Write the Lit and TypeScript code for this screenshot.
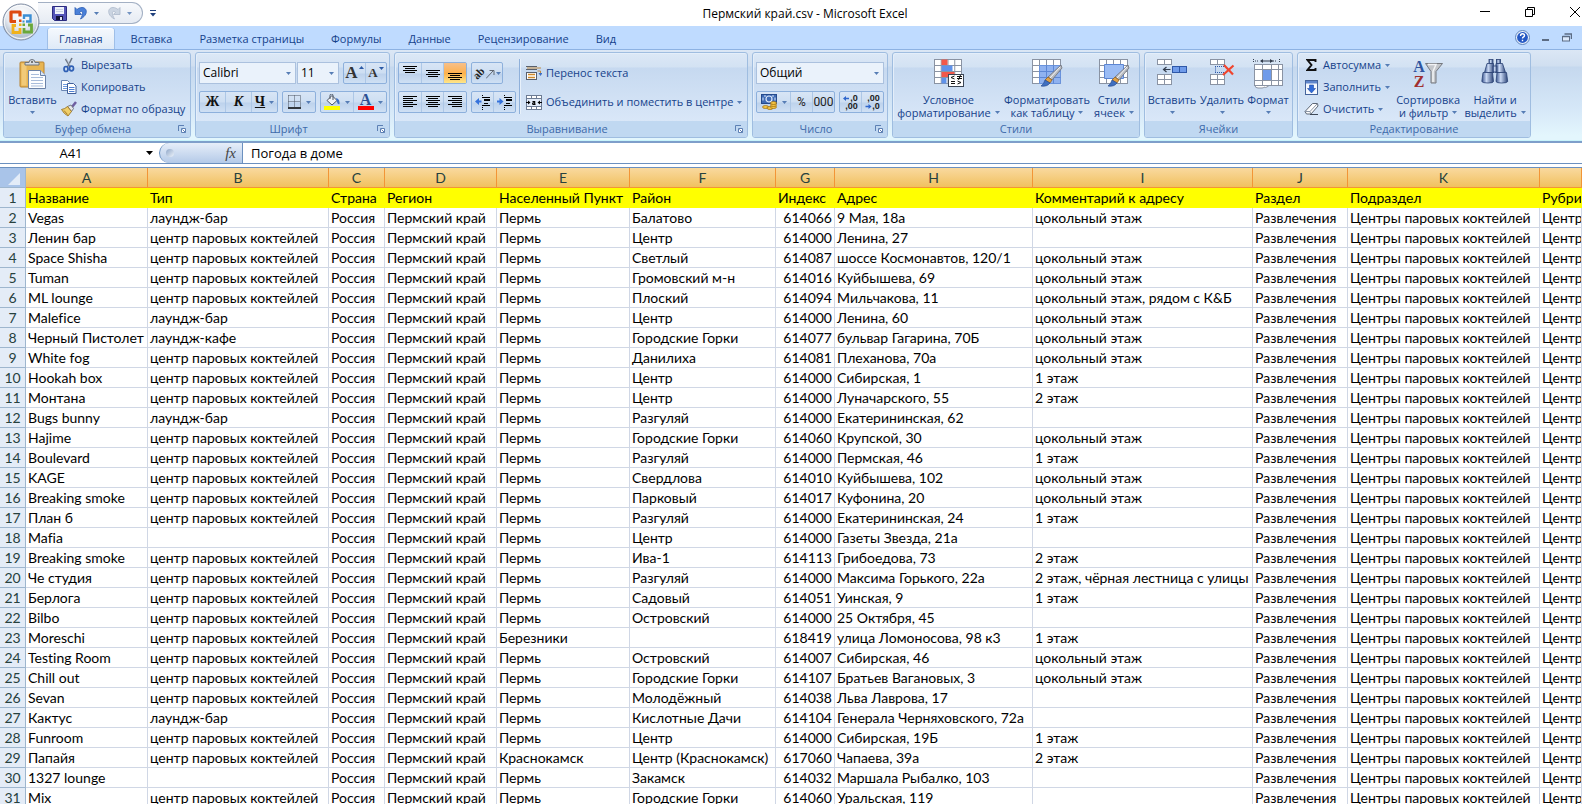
import { LitElement, html, css, svg, nothing } from "lit";
import { customElement, property } from "lit/decorators.js";

const TYPES = ["", "центр паровых коктейлей", "лаундж-бар", "лаундж-кафе"];
const GROUND = "цокольный этаж";

type Place = [string, number, string, string, string, string, string];

const PLACES: Place[] = [
  ["Vegas", 2, "Пермь", "Балатово", "614066", "9 Мая, 18а", GROUND],
  ["Ленин бар", 1, "Пермь", "Центр", "614000", "Ленина, 27", ""],
  ["Space Shisha", 1, "Пермь", "Светлый", "614087", "шоссе Космонавтов, 120/1", GROUND],
  ["Tuman", 1, "Пермь", "Громовский м-н", "614016", "Куйбышева, 69", GROUND],
  ["ML lounge", 1, "Пермь", "Плоский", "614094", "Мильчакова, 11", "цокольный этаж, рядом с К&Б"],
  ["Malefice", 2, "Пермь", "Центр", "614000", "Ленина, 60", GROUND],
  ["Черный Пистолет", 3, "Пермь", "Городские Горки", "614077", "бульвар Гагарина, 70Б", GROUND],
  ["White fog", 1, "Пермь", "Данилиха", "614081", "Плеханова, 70а", GROUND],
  ["Hookah box", 1, "Пермь", "Центр", "614000", "Сибирская, 1", "1 этаж"],
  ["Монтана", 1, "Пермь", "Центр", "614000", "Луначарского, 55", "2 этаж"],
  ["Bugs bunny", 2, "Пермь", "Разгуляй", "614000", "Екатерининская, 62", ""],
  ["Hajime", 1, "Пермь", "Городские Горки", "614060", "Крупской, 30", GROUND],
  ["Boulevard", 1, "Пермь", "Разгуляй", "614000", "Пермская, 46", "1 этаж"],
  ["KAGE", 1, "Пермь", "Свердлова", "614010", "Куйбышева, 102", GROUND],
  ["Breaking smoke", 1, "Пермь", "Парковый", "614017", "Куфонина, 20", GROUND],
  ["План б", 1, "Пермь", "Разгуляй", "614000", "Екатерининская, 24", "1 этаж"],
  ["Mafia", 0, "Пермь", "Центр", "614000", "Газеты Звезда, 21а", ""],
  ["Breaking smoke", 1, "Пермь", "Ива-1", "614113", "Грибоедова, 73", "2 этаж"],
  ["Че студия", 1, "Пермь", "Разгуляй", "614000", "Максима Горького, 22а", "2 этаж, чёрная лестница с улицы"],
  ["Берлога", 1, "Пермь", "Садовый", "614051", "Уинская, 9", "1 этаж"],
  ["Bilbo", 1, "Пермь", "Островский", "614000", "25 Октября, 45", ""],
  ["Moreschi", 1, "Березники", "", "618419", "улица Ломоносова, 98 к3", "1 этаж"],
  ["Testing Room", 1, "Пермь", "Островский", "614007", "Сибирская, 46", GROUND],
  ["Chill out", 1, "Пермь", "Городские Горки", "614107", "Братьев Вагановых, 3", GROUND],
  ["Sevan", 1, "Пермь", "Молодёжный", "614038", "Льва Лаврова, 17", ""],
  ["Кактус", 2, "Пермь", "Кислотные Дачи", "614104", "Генерала Черняховского, 72а", ""],
  ["Funroom", 1, "Пермь", "Центр", "614000", "Сибирская, 19Б", "1 этаж"],
  ["Папайя", 1, "Краснокамск", "Центр (Краснокамск)", "617060", "Чапаева, 39а", "2 этаж"],
  ["1327 lounge", 0, "Пермь", "Закамск", "614032", "Маршала Рыбалко, 103", ""],
  ["Mix", 1, "Пермь", "Городские Горки", "614060", "Уральская, 119", ""],
];

const TITLES = ["Название", "Тип", "Страна", "Регион", "Населенный Пункт", "Район", "Индекс", "Адрес",
  "Комментарий к адресу", "Раздел", "Подраздел", "Рубрика"];

const WIDTHS = [122, 181, 56, 112, 133, 146, 59, 198, 220, 95, 192];

const draw = (w: number, h: number, body: unknown) =>
  html`<svg class="ico" width=${w} height=${h} viewBox="0 0 ${w} ${h}" aria-hidden="true">${body}</svg>`;

const lines = (spans: number[][], top = 0) =>
  svg`${spans.map(([a, b], i) => svg`<path d="M${a} ${top + i * 2 + 0.5}H${b}" stroke="#000"/>`)}`;

const brush = svg`<path d="M29 6 L30 9 L20 21 L16 18 Z" fill="#b9bcc2" stroke="#6d7076" stroke-width=".8"/>
  <path d="M28 8 L18 19" stroke="#f4f5f7"/>
  <path d="M16 18 L20 21 L18 24 L13 21 Z" fill="#e0a044" stroke="#8a5a18" stroke-width=".7"/>
  <path d="M13 21 L18 24 Q15 28 9 27 Q12 25 13 21Z" fill="#3f6fc0" stroke="#2c4f92" stroke-width=".7"/>`;

const grid = (x0: number, y0: number, cols: number, rows: number, cw: number, ch: number) =>
  svg`<rect x=${x0} y=${y0} width=${cols * cw} height=${rows * ch} fill="#fff" stroke="#8a93a3"/>
  ${Array.from({ length: cols - 1 }, (_, i) => svg`<path d="M${x0 + (i + 1) * cw} ${y0}v${rows * ch}" stroke="#8a93a3"/>`)}
  ${Array.from({ length: rows - 1 }, (_, i) => svg`<path d="M${x0} ${y0 + (i + 1) * ch}h${cols * cw}" stroke="#8a93a3"/>`)}`;

const ICON = {
  office: draw(38, 38, svg`<defs>
      <radialGradient id="orb" cx=".5" cy=".3" r=".75"><stop offset="0" stop-color="#fff"/><stop offset=".55" stop-color="#e3e8ef"/><stop offset=".8" stop-color="#b4c0d0"/><stop offset="1" stop-color="#e9eef5"/></radialGradient></defs>
    <circle cx="19" cy="19" r="18" fill="url(#orb)" stroke="#7f8ca2"/>
    <circle cx="19" cy="19" r="16.6" fill="none" stroke="#fff" stroke-opacity=".8"/>
    <g fill="none" stroke-width="3.200">
      <path d="M18 13.500 V9 H9 V18.500 H14" stroke="#dd4a12" stroke-linejoin="round"/>
      <path d="M22 16 V12.500 H28.500 V18.500 H24" stroke="#3c8fd4" stroke-width="2.400"/>
      <path d="M14 22.500 H11 V29.500 H18 V25" stroke="#f0b21c" stroke-width="2.800"/>
      <path d="M22 25 V29 H29.500 V22 H26" stroke="#6aa83a" stroke-width="2.800"/>
    </g>
    <path d="M17 16.500h2.500v2.500h-2.500z" fill="#dd4a12"/><path d="M20.500 17.500h2v2h-2z" fill="#3c8fd4"/><path d="M17 20.500h2.500v2.500h-2.500z" fill="#f0b21c"/><path d="M20.500 20.500h2.500v2.500h-2.500z" fill="#6aa83a"/>`),
  save: draw(15, 15, svg`<path d="M.5 .5h14v14h-12l-2-2z" fill="#5454b8" stroke="#2c2c80"/>
    <rect x="3" y="1" width="9" height="7" fill="#eef2fb"/><path d="M4 3.500h7M4 5.500h7" stroke="#c8d0e4"/>
    <rect x="4" y="10" width="7" height="4" fill="#15153c"/><rect x="8" y="11" width="2" height="3" fill="#dfe4f4"/>`),
  undo: draw(14, 14, svg`<path d="M1 1.500v7h6.500L5.500 6.300C8 4 10.500 6 6.500 13 14.500 9 13.500 1.500 8 1.500c-2 0-3.500.8-5 2z" fill="#4a80d8" stroke="#2a5ab4" stroke-width=".8"/>`),
  redo: draw(14, 14, svg`<path d="M13 1.500v7H6.500l2-2.200C6 4 3.500 6 7.500 13-.5 9 .5 1.500 6 1.500c2 0 3.500.8 5 2z" fill="#c3cedd" stroke="#9dabc0" stroke-width=".8"/>`),
  down: draw(5, 3, svg`<path d="M0 0h5L2.500 3z" fill="#567db5"/>`),
  custom: draw(6, 7, svg`<path d="M0 .5h6" stroke="#1f3f7c"/><path d="M0 3h6L3 6.500z" fill="#1f3f7c"/>`),
  winMin: draw(10, 10, svg`<path d="M0 4.500h10" stroke="#000"/>`),
  winRestore: draw(10, 10, svg`<path d="M.5 2.500h7v7h-7zM2.500 2v-1.500h7v7H8" fill="none" stroke="#000"/>`),
  winClose: draw(10, 10, svg`<path d="M0 0l10 10M10 0L0 10" stroke="#000"/>`),
  help: draw(15, 15, svg`<circle cx="7.500" cy="7.500" r="7" fill="#e7effb" stroke="#5f85bd"/><circle cx="7.500" cy="7.500" r="5.400" fill="#2458c4"/>
    <path d="M5.500 6q0-2.300 2-2.300t2 1.800q0 1-1.200 1.700-.8.500-.8 1.300M7.500 9.700v1.500" fill="none" stroke="#fff" stroke-width="1.400"/>`),
  mdiMin: draw(8, 9, svg`<path d="M0 7h7" stroke="#5c6c84" stroke-width="2"/>`),
  mdiRestore: draw(10, 9, svg`<path d="M2.500 1h7v5" fill="none" stroke="#5c6c84" stroke-width="1.500"/><rect x=".5" y="3.500" width="7" height="4.500" fill="#dce9fb" stroke="#5c6c84"/><path d="M.5 3.500h7" stroke="#5c6c84" stroke-width="1.500"/>`),
  paste: draw(28, 30, svg`<rect x="1" y="3" width="24" height="25" rx="1" fill="#e8b552" stroke="#b98330"/>
    <rect x="2.500" y="4.500" width="5" height="22" fill="#f2ca78"/>
    <path d="M6 6V3.500h4Q10 .5 13 .5t3 3h4V6z" fill="#d9dde3" stroke="#6d747f"/><circle cx="13" cy="3" r="1" fill="#555"/>
    <path d="M9.500 11.500h12l5 5v13h-17z" fill="#fdfeff" stroke="#6c83a8"/><path d="M21.500 11.500v5h5" fill="#dbe6f5" stroke="#6c83a8"/>
    <path d="M12 15.500h8M12 18.500h12M12 21.500h12M12 24.500h12M12 27h12" stroke="#a9bddb"/>`),
  cut: draw(16, 16, svg`<path d="M4.500 2l5 8M11 1L6.500 10" stroke="#6d7887" stroke-width="1.600" fill="none"/><path d="M5 1l4.500 8" stroke="#c7cfda" stroke-width=".8"/>
    <ellipse cx="5" cy="12" rx="2" ry="2.500" fill="none" stroke="#2f5fb4" stroke-width="1.700"/><ellipse cx="10.500" cy="11.500" rx="2" ry="2.300" fill="none" stroke="#2f5fb4" stroke-width="1.700"/>`),
  copy: draw(16, 16, svg`<path d="M.5 1.500h6l2 2v8h-8z" fill="#fff" stroke="#6a86b4"/><path d="M2 5.500h4M2 7.500h4M2 9.500h4" stroke="#6f9be0"/>
    <path d="M6.500 4.500h6l2.500 2.500v7.500H6.500z" fill="#fff" stroke="#3f5f9a"/><path d="M8 8.500h5.500M8 10.500h5.500M8 12.500h5.500" stroke="#4f7fd0"/>`),
  painter: draw(16, 16, svg`<path d="M15 1l-4 5" stroke="#6f5fa0" stroke-width="2.500"/><path d="M6.500 5.500l3.500-1.500 2.500 3.500-2 3z" fill="#e4e6ea" stroke="#6c7077" stroke-width=".9"/>
    <path d="M6.500 5.500l4 5-3.500 4.500Q3 13 .5 8.500 4 8 6.500 5.500z" fill="#f0cf6a" stroke="#9c7420" stroke-width=".9"/><path d="M3 9.500l3.500 4" stroke="#a97d28"/>`),
  grow: draw(5, 14, svg`<path d="M0 3h5L2.500 0z" fill="#2b5aa6"/>`),
  shrink: draw(5, 14, svg`<path d="M0 1h5L2.500 4z" fill="#2b5aa6"/>`),
  border: draw(14, 14, svg`<path d="M.5 .5h12M.5 6.500h12M.5 .5v11M6.500 .5v11M12.500 .5v11" stroke="#4a5260" stroke-dasharray="1 1"/><path d="M0 13h13" stroke="#000" stroke-width="1.500"/>`),
  fill: draw(17, 16, svg`<path d="M3 6.500L8 1.500l5 5-5 4.500z" fill="#f2f4f8" stroke="#4c5665"/><path d="M6 5V1.500Q6 0 7.500 0T9 1.500V6" fill="none" stroke="#4c5665"/><path d="M12 4q4 1 3.500 6-1.500 1-2.500-2z" fill="#3e6fc4"/><rect x="0" y="12" width="16" height="4" fill="#ff0"/>`),
  wrap: draw(16, 16, svg`<path d="M0 1.500h11M0 4.500h11" stroke="#59606c"/><path d="M1 3h14M11.500 6h3V9" fill="none" stroke="#c08a40"/><path d="M12.500 8h4l-2 3z" fill="#3e6fc4"/>
    <rect x=".5" y="7.500" width="10" height="7" fill="#fff" stroke="#59606c"/><path d="M2 9.500h7M2 12.500h7" stroke="#d08a2c" stroke-width="1.400"/>`),
  merge: draw(16, 15, svg`<rect x=".5" y=".5" width="15" height="14" fill="#fff" stroke="#6d7c94"/><path d="M5.500 .5v3M10.500 .5v3M5.500 11v3M10.500 11v3M.5 3.500h15M.5 11.500h15" stroke="#6d7c94"/>
    <rect x="1" y="4" width="14" height="7" fill="#e2ebf8"/><path d="M0 7.500h4M12 7.500h4" stroke="#000" stroke-width="1.200"/><path d="M2 5.500v4l2.500-2zM14 5.500v4l-2.500-2z"/>
    <path d="M6.500 6.500h2.200v3M8.700 7.800H7q-1 1 .2 1.600h2.300" fill="none" stroke="#000" stroke-width="1.100"/>`),
  outdent: draw(16, 15, svg`<path d="M7 .5h1M7 2.500h8M9 4.500h6M9 8.500h4M7 10.500h8M7 12.500h1M7 14.500h1" stroke="#000"/><path d="M9 5.500h6" stroke="#000"/><path d="M0 6.500l4-3.500v2.400h2.500v2.200H4V10z" fill="#3572dc"/>`),
  indent: draw(16, 15, svg`<path d="M7 .5h1M7 2.500h8M9 4.500h6M9 8.500h4M7 10.500h8M7 12.500h1M7 14.500h1" stroke="#000"/><path d="M9 5.500h6" stroke="#000"/><path d="M6.500 6.500L2.500 3v2.400H0v2.200h2.500V10z" fill="#3572dc"/>`),
  slant: draw(9, 12, svg`<path d="M0 11.500L7 4M3.500 3.500H8V8" fill="none" stroke="#5f6670"/>`),
  money: draw(17, 16, svg`<rect x=".5" y=".5" width="15" height="9" fill="#3f6bb5" stroke="#254a8c"/><ellipse cx="8" cy="5" rx="3" ry="3" fill="none" stroke="#dce8fb" stroke-width="1.200"/><path d="M2 3.500v3M14 3.500v3M3 2h2M11 2h2" stroke="#dce8fb"/>
    <g fill="#f5c542" stroke="#9a6a10" stroke-width=".7"><ellipse cx="4.500" cy="13" rx="3" ry="1.500"/><ellipse cx="9" cy="14" rx="3" ry="1.500"/><ellipse cx="12.500" cy="13" rx="3" ry="1.500"/><ellipse cx="12.500" cy="11" rx="3" ry="1.500"/><ellipse cx="12.500" cy="9" rx="3" ry="1.500"/></g>`),
  left: draw(7, 5, svg`<path d="M0 2.500L3 0v1.700h3v1.600H3V5z" fill="#2f66cc"/>`),
  right: draw(7, 5, svg`<path d="M6.500 2.500L3.500 0v1.700h-3v1.600h3V5z" fill="#2f66cc"/>`),
  conditional: draw(30, 29, svg`${grid(0.5, 0.5, 4, 4, 6.75, 6)}<path d="M7.500 .5h6v5.500h-6z" fill="#f2584a"/><path d="M7.500 6.500h11v5.500h-11z" fill="#5f92ea"/><path d="M7.500 13h13v5h-13z" fill="#f2584a"/><path d="M7.500 19h5v5.500h-5z" fill="#5f92ea"/>
    <rect x="14.500" y="15.500" width="15" height="12" fill="#fff" stroke="#3b4656"/><path d="M20.500 17l-3.500 1.500 3.500 1.500M17 22.500h4M17 24.500h4M23 17.500h5M23 19.500h5M26.500 16l-2 5M23.500 22l3.500 1.500-3.500 1.500" fill="none" stroke="#111"/>`),
  table: draw(31, 29, svg`${grid(0.5, 0.5, 4, 4, 7, 6)}<path d="M7.500 6.500h21v18h-21z" fill="#8fb2f0" stroke="#6a93dc"/><path d="M14.500 6.500v18M21.500 6.500v18M7.500 12.500h21M7.500 18.500h21" stroke="#5c86d4"/>${brush}`),
  styles: draw(31, 29, svg`${grid(0.5, 0.5, 4, 4, 7, 6)}<path d="M5.500 5.500h19v14h-19z" fill="#9bbcf4" stroke="#5c86d4"/>${brush}`),
  insert: draw(31, 28, svg`${grid(0.5, 0.5, 2, 1, 7, 5)}${grid(0.5, 15.500, 2, 2, 7, 5)}<rect x="15.500" y="7.500" width="14" height="6" fill="#6f9bea" stroke="#2f58a8"/><path d="M22.500 7.500v6" stroke="#2f58a8"/><path d="M13.500 10.500H7M9.500 8L6.500 10.500 9.500 13" fill="none" stroke="#333d4d" stroke-width="1.200"/>`),
  remove: draw(25, 28, svg`${grid(0.5, 0.5, 2, 1, 7, 5)}${grid(0.5, 15.500, 2, 2, 7, 5)}<path d="M5 7.500h9M5 13.500h9M5.500 7.500v6" stroke="#2f58a8" stroke-dasharray="1 1" fill="none"/><path d="M14 6l9 9.500M23.500 6.500L13 16" stroke="#f0452e" stroke-width="2.200"/>`),
  format: draw(31, 30, svg`<path d="M.5 0v4M26.500 0v4M2 2h4M20 2h4" stroke="#333d4d" stroke-dasharray="1 1"/><path d="M8 2h12" stroke="#333d4d" stroke-width="1.200"/><path d="M10 0v4L7 2zM17 0v4l3-2z" fill="#333d4d"/>
    <rect x="1.500" y="5.500" width="28" height="21" fill="#fff" stroke="#8a93a3"/><path d="M9.500 5.500v21M18.500 5.500v21M25.500 5.500v21M1.500 10.500h28M1.500 21.500h28" stroke="#8a93a3"/><rect x="10" y="11" width="8" height="10" fill="#6f9bea"/><path d="M2 26.500q0 2.500 3 2.500h4q2 0 2-1 1 1 3 0l2-1.500z" fill="#fff" stroke="#8a93a3"/>`),
  sum: draw(11, 12, svg`<path d="M9.500 3V1H1.500l4 5-4 5H9.500V9" fill="none" stroke="#111" stroke-width="1.900"/>`),
  fillDown: draw(13, 15, svg`<rect x=".5" y=".5" width="12" height="14" fill="#f6f9fe" stroke="#44639c"/><rect x="1" y="1" width="11" height="2.500" fill="#5f86cc"/><path d="M4.500 5h4v3.500h2L6.500 13 2.500 8.500h2z" fill="#2f6ad8" stroke="#1e4aa2" stroke-width=".6"/>`),
  erase: draw(15, 14, svg`<path d="M1 9.500L8.500 1.500h5L14 4 7 12H2.500z" fill="#fdfdfe" stroke="#5c6675"/><path d="M1 9.500h5L13.500 1.500M6 9.500l.8 2.500" fill="none" stroke="#8b95a5"/><path d="M6 12.500h8" stroke="#3e4857" stroke-width="1.200"/>`),
  funnel: draw(18, 21, svg`<path d="M.5 .5h17L11 8.500V20l-5 0V8.500z" fill="#c3c6cb" stroke="#74787f"/><path d="M3 1.500h8L8 8.500V19" fill="none" stroke="#f2f3f5" stroke-width="1.500"/>`),
  find: draw(28, 25, svg`<defs><linearGradient id="lens" x1="0" x2="1" y1="0" y2="0"><stop offset="0" stop-color="#36518c"/><stop offset=".4" stop-color="#c9d9f4"/><stop offset="1" stop-color="#2c4478"/></linearGradient></defs>
    <g fill="url(#lens)" stroke="#2a4174" stroke-width=".8"><rect x="8" y=".5" width="4" height="4"/><rect x="15.500" y=".5" width="4" height="4"/><path d="M6 4.500h6.500l.5 9H3.500z"/><path d="M15 4.500h6.500l3 9H14.500z"/><rect x="12" y="7" width="4" height="6"/><path d="M2 13.500h9.500l1 9q0 1.500-5.500 1.500T.8 22.500z"/><path d="M16 13.500h9.500l1.200 9q-.7 1.500-6 1.500t-5.700-1.500z"/></g>`),
  launcher: draw(8, 8, svg`<path d="M.5 6V.5H6" fill="none" stroke="#5d80b4"/><path d="M3.500 3.500h4v4h-4z" fill="#fff" stroke="#5d80b4"/><path d="M4.500 4.500l3 3" stroke="#5d80b4"/>`),
};

const ALIGN = {
  l: [[0, 14], [0, 10], [0, 14], [0, 10], [0, 14], [0, 10]],
  c: [[0, 14], [2, 12], [0, 14], [2, 12], [0, 14], [2, 12]],
  r: [[0, 14], [4, 14], [0, 14], [4, 14], [0, 14], [4, 14]],
};
const vAlign = (top: number) => draw(14, 16, lines([[0, 14], [2, 12], [0, 14], [2, 12]], top));
const hAlign = (s: number[][]) => draw(14, 12, lines(s));

@customElement("ribbon-group")
class RibbonGroup extends LitElement {
  @property() label = "";
  @property({ type: Boolean }) launcher = false;

  static styles = css`
    :host { display: flex; flex-direction: column; flex: none; box-sizing: border-box; border: 1px solid #9fbde0; border-radius: 3px;
      box-shadow: inset 1px 1px 0 #e4eefa; overflow: hidden;
      background: linear-gradient(#dce8f6 0, #d3e2f3 14px, #c6d9f0 15px, #d9e7f8 68px); }
    .body { flex: 1; display: flex; min-height: 0; }
    .foot { display: flex; align-items: center; height: 16px; padding: 0 4px; background: #c0d8f1; color: #3e6aaa; line-height: 16px; }
    .name { flex: 1; text-align: center; }
    .open { border: 0; padding: 0; background: none; display: flex; }
  `;

  render() {
    return html`<div class="body"><slot></slot></div>
      <div class="foot"><span class="name">${this.label}</span>
        ${this.launcher ? html`<button class="open" aria-label=${this.label}>${ICON.launcher}</button>` : nothing}</div>`;
  }
}

@customElement("excel-ribbon")
class ExcelRibbon extends LitElement {
  static styles = css`
    :host { display: flex; gap: 4px; padding: 2px 3px 3px; height: 86px; overflow: hidden; color: #15428b; font-size: 11px;
      background: linear-gradient(#dbe7f5 0, #d0dff0 16px, #c5d8ee 17px, #d6e8f8 60px, #e3f6fd 86px);
      border-top: 1px solid #8db2e3; box-shadow: inset 0 -1px 0 #c8f4fb; }
    button, select { font: inherit; color: inherit; margin: 0; padding: 0; border: 0; background: none; }
    button { display: flex; align-items: center; justify-content: center; white-space: nowrap; }
    svg { flex: none; display: block; }
    .clip { width: 188px; } .font { width: 195px; } .align { width: 354px; } .num { width: 136px; }
    .style { width: 248px; } .cells { width: 149px; } .edit { width: 234px; }
    .big { flex-direction: column; justify-content: flex-start; line-height: 13px; padding-top: 6px; }
    .pic { height: 34px; display: flex; align-items: flex-start; }
    .sub { display: flex; align-items: center; gap: 4px; height: 12px; }
    .row { display: flex; align-items: center; gap: 4px; }
    .stack { display: flex; flex-direction: column; padding-top: 1px; }
    .stack button { height: 22px; gap: 4px; justify-content: flex-start; }
    .lead { padding-left: 5px; }
    .slot16 { width: 16px; display: flex; justify-content: center; }
    .two { display: flex; flex-direction: column; gap: 7px; padding: 9px 3px 0; flex: 1; }
    .set { display: flex; box-sizing: border-box; height: 22px; border: 1px solid #8db0dc; border-radius: 2px;
      background: linear-gradient(#d8e5f5 0, #cddef2 10px, #bdd2ec 11px, #cfe0f4 20px); }
    .set button { flex: 1; gap: 4px; min-width: 21px; }
    .set button + button { border-left: 1px solid #adc7e6; }
    .set .tight { gap: 1px; }
    .set .cash { flex: none; width: 33px; }
    .set .on { background: linear-gradient(#f6c08a, #fdb254 9px, #fbb04a 10px, #fee68a); }
    .combo { display: grid; box-sizing: border-box; height: 22px; align-items: center; background: #eaf2fb; border: 1px solid #abc1de; color: #000; font-size: 12px; }
    .combo select { grid-area: 1 / 1; appearance: none; height: 20px; padding-left: 3px; outline: 0; width: 100%; }
    .combo svg { grid-area: 1 / 1; justify-self: end; margin-right: 4px; pointer-events: none; }
    .pair { display: flex; gap: 1px; }
    .w97 { width: 97px; } .w42 { width: 42px; } .w79 { width: 79px; } .w34 { width: 34px; } .w69 { width: 69px; } .w32 { width: 32px; } .w45 { width: 45px; }
    .fit { flex: none; }
    .serif { font: bold 14px "Liberation Serif", serif; color: #111; }
    .it { font-style: italic; }
    .un { text-decoration: underline; }
    .letter { font: bold 17px/18px "Liberation Serif", serif; color: #333; }
    .small { font-size: 13px; }
    .tint { display: flex; flex-direction: column; align-items: center; width: 16px; font: bold 16px/12px "Liberation Serif", serif; color: #2c4f92; border-bottom: 4px solid #f00; }
    .wide { flex: 1; }
    .rule { width: 1px; margin: 6px 0 7px; background: #8fb0da; border-right: 1px solid #e8f1fb; }
    .texts { display: flex; flex-direction: column; gap: 7px; padding: 9px 0 0 5px; }
    .texts button { height: 22px; gap: 4px; justify-content: flex-start; }
    .dig { font: 12px "Roboto", sans-serif; color: #222; }
    .dec { display: flex; flex-direction: column; align-items: flex-end; font: bold 9px/8px "Liberation Sans", sans-serif; color: #222; }
    .dec span { display: flex; align-items: center; }
    .az { display: flex; flex-direction: column; font: bold 16px/15px "Liberation Serif", serif; color: #2f55a0; }
    .z { color: #a02f2f; }
    .sort { display: flex; }
    .sort svg { margin-top: 4px; }
    .aa { font: bold 11px/11px "Liberation Serif", serif; color: #222; transform: rotate(-45deg); }
  `;

  private big(w: number, icon: unknown, a: string, b?: string) {
    return html`<button class="big" style="width:${w}px"><span class="pic">${icon}</span><span>${a}</span>
      <span class="sub">${b ?? nothing}${ICON.down}</span></button>`;
  }

  render() {
    return html`
      <ribbon-group class="clip" label="Буфер обмена" launcher>
        ${this.big(57, ICON.paste, "Вставить")}
        <div class="stack">
          <button>${ICON.cut}Вырезать</button>
          <button>${ICON.copy}Копировать</button>
          <button>${ICON.painter}Формат по образцу</button>
        </div>
      </ribbon-group>

      <ribbon-group class="font" label="Шрифт" launcher>
        <div class="two">
          <div class="row">
            <span class="pair">
              <label class="combo w97"><select aria-label="Шрифт"><option>Calibri</option></select>${ICON.down}</label>
              <label class="combo w42"><select aria-label="Размер"><option>11</option></select>${ICON.down}</label>
            </span>
            <div class="set wide">
              <button class="tight" aria-label="Увеличить"><span class="letter">A</span>${ICON.grow}</button>
              <button class="tight" aria-label="Уменьшить"><span class="letter small">A</span>${ICON.shrink}</button>
            </div>
          </div>
          <div class="row">
            <div class="set w79">
              <button class="serif">Ж</button><button class="serif it">К</button>
              <button><span class="serif un">Ч</span>${ICON.down}</button>
            </div>
            <div class="set w34"><button aria-label="Границы">${ICON.border}${ICON.down}</button></div>
            <div class="set wide">
              <button aria-label="Заливка">${ICON.fill}${ICON.down}</button>
              <button aria-label="Цвет текста"><span class="tint">A</span>${ICON.down}</button>
            </div>
          </div>
        </div>
      </ribbon-group>

      <ribbon-group class="align" label="Выравнивание" launcher>
        <div class="two fit">
          <div class="row">
            <div class="set w69">
              <button aria-label="По верхнему краю">${vAlign(1)}</button>
              <button aria-label="По середине">${vAlign(5)}</button>
              <button class="on" aria-label="По нижнему краю">${vAlign(8)}</button>
            </div>
            <div class="set w32"><button class="tight" aria-label="Ориентация"><span class="aa">ab</span>${ICON.slant}${ICON.down}</button></div>
          </div>
          <div class="row">
            <div class="set w69">
              <button aria-label="По левому краю">${hAlign(ALIGN.l)}</button>
              <button aria-label="По центру">${hAlign(ALIGN.c)}</button>
              <button aria-label="По правому краю">${hAlign(ALIGN.r)}</button>
            </div>
            <div class="set w45">
              <button aria-label="Уменьшить отступ">${ICON.outdent}</button>
              <button aria-label="Увеличить отступ">${ICON.indent}</button>
            </div>
          </div>
        </div>
        <div class="rule"></div>
        <div class="texts">
          <button>${ICON.wrap}Перенос текста</button>
          <button>${ICON.merge}Объединить и поместить в центре ${ICON.down}</button>
        </div>
      </ribbon-group>

      <ribbon-group class="num" label="Число" launcher>
        <div class="two">
          <label class="combo"><select aria-label="Числовой формат"><option>Общий</option></select>${ICON.down}</label>
          <div class="row">
            <div class="set w79">
              <button class="cash" aria-label="Денежный формат">${ICON.money}${ICON.down}</button>
              <button class="dig">%</button><button class="dig">000</button>
            </div>
            <div class="set wide">
              <button aria-label="Увеличить разрядность"><span class="dec"><span>${ICON.left},0</span><span>,00</span></span></button>
              <button aria-label="Уменьшить разрядность"><span class="dec"><span>,00</span><span>${ICON.right},0</span></span></button>
            </div>
          </div>
        </div>
      </ribbon-group>

      <ribbon-group class="style" label="Стили">
        ${this.big(111, ICON.conditional, "Условное", "форматирование")}
        ${this.big(86, ICON.table, "Форматировать", "как таблицу")}
        ${this.big(48, ICON.styles, "Стили", "ячеек")}
      </ribbon-group>

      <ribbon-group class="cells" label="Ячейки">
        ${this.big(54, ICON.insert, "Вставить")}
        ${this.big(46, ICON.remove, "Удалить")}
        ${this.big(46, ICON.format, "Формат")}
      </ribbon-group>

      <ribbon-group class="edit" label="Редактирование">
        <div class="stack lead">
          <button><span class="slot16">${ICON.sum}</span>Автосумма ${ICON.down}</button>
          <button><span class="slot16">${ICON.fillDown}</span>Заполнить ${ICON.down}</button>
          <button><span class="slot16">${ICON.erase}</span>Очистить ${ICON.down}</button>
        </div>
        ${this.big(76, html`<span class="sort"><span class="az"><span>A</span><span class="z">Z</span></span>${ICON.funnel}</span>`, "Сортировка", "и фильтр")}
        ${this.big(58, ICON.find, "Найти и", "выделить")}
      </ribbon-group>
    `;
  }
}

@customElement("sheet-grid")
class SheetGrid extends LitElement {
  static styles = css`
    :host { display: block; overflow: hidden; }
    table { width: 100%; table-layout: fixed; border-collapse: separate; border-spacing: 0; font-size: 14px; line-height: 19px; color: #000; font-variant-ligatures: none; }
    th, td { box-sizing: border-box; height: 20px; padding: 0 2px; overflow: hidden; white-space: nowrap; text-align: left; font-weight: normal;
      border-right: 1px solid #d0d7e5; border-bottom: 1px solid #d0d7e5; }
    .num { text-align: right; }
    thead th { text-align: center; color: #27413e; background: linear-gradient(#f9d99f, #f1c15f); border-color: #f29536; }
    .side { padding: 0; text-align: center; color: #27413e; background: #e4ecf7; border-color: #9eb6ce; }
    .title td { background: #ff0; border-color: #ff0; }
    thead .corner { background: #a9c4e9; border-color: #9eb6ce; }
    .corner svg { display: block; margin: 3px 3px 0 auto; }
    .index { width: 26px; }
  `;

  render() {
    const rows = PLACES.map(([name, type, city, area, zip, street, note]) =>
      [name, TYPES[type], "Россия", "Пермский край", city, area, zip, street, note,
        "Развлечения", "Центры паровых коктейлей", "Центры паровых коктейлей"]);
    return html`<table>
      <colgroup><col class="index">${WIDTHS.map((w) => html`<col style="width:${w}px">`)}<col></colgroup>
      <thead><tr><th class="corner">${draw(12, 12, svg`<path d="M12 0v12H0z" fill="#e3ecf8"/>`)}</th>
        ${[..."ABCDEFGHIJK"].map((c) => html`<th scope="col">${c}</th>`)}<th></th></tr></thead>
      <tbody>
        <tr class="title"><th class="side" scope="row">1</th>${TITLES.map((t) => html`<td>${t}</td>`)}</tr>
        ${rows.map((cells, i) => html`<tr><th class="side" scope="row">${i + 2}</th>
          ${cells.map((c, j) => html`<td class=${j === 6 ? "num" : ""}>${c}</td>`)}</tr>`)}
      </tbody></table>`;
  }
}

@customElement("app-root")
class AppRoot extends LitElement {
  static styles = css`
    :host { display: flex; flex-direction: column; height: 100vh; overflow: hidden; background: #fff; font: 12px/16px "Open Sans", "Noto Sans", sans-serif; }
    button, input { font: inherit; color: inherit; margin: 0; padding: 0; border: 0; background: none; outline: 0; }
    button { display: flex; align-items: center; justify-content: center; }
    svg { display: block; flex: none; }
    .top { display: flex; height: 26px; flex: none; position: relative; }
    .orb { position: absolute; left: 2px; top: 3px; z-index: 2; }
    .quick { display: flex; align-items: center; height: 20px; margin: 2px 0 0 38px; padding: 0 10px 0 14px; width: 80px;
      border: 1px solid #a3b0c4; border-left: 0; border-radius: 0 11px 11px 0; background: linear-gradient(#f7f9fc, #e6ebf3); }
    .undo { margin-left: 7px; gap: 6px; }
    .redo { margin-left: 8px; gap: 6px; opacity: .8; }
    .more { margin-left: 7px; }
    .title { flex: 1; text-align: center; line-height: 27px; padding-right: 8px; color: #000; }
    .win { width: 45px; height: 24px; }
    .last { width: 40px; justify-content: flex-start; padding-left: 18px; margin-right: -10px; }
    .tabs { display: flex; align-items: flex-end; flex: none; height: 23px; padding-left: 48px; gap: 7px; background: #bfdbff; color: #15428b; font-size: 11px; }
    .tab { height: 21px; padding: 0 10px; border: 1px solid transparent; border-width: 1px 0 0; border-radius: 3px 3px 0 0; }
    .on { padding: 0 11px; background: linear-gradient(#f4f8fd, #dfeaf7); border-color: #fff; box-shadow: -1px 0 #9fbfe8, 1px 0 #9fbfe8; }
    .tools { margin-left: auto; display: flex; align-items: center; height: 23px; padding-right: 10px; gap: 12px; }
    .bar { display: flex; flex: none; height: 20px; border: 1px solid #6b90bf; border-width: 2px 0 1px; border-top-color: #7f9fca; background: #fff; margin-bottom: 3px; color: #000; font-size: 13px; }
    .name { width: 142px; text-align: center; }
    .drop { width: 17px; justify-content: flex-start; padding-left: 4px; box-sizing: border-box; }
    .knob { width: 84px; box-sizing: border-box; display: flex; align-items: center; justify-content: space-between; padding: 0 6px; border: 1px solid #6b90bf; border-width: 0 1px 0 1px;
      border-radius: 10px 0 0 10px; background: linear-gradient(#e6eef9, #b4cae8); }
    .dot { width: 8px; height: 8px; border-radius: 4px; background: linear-gradient(135deg, #8ea6c8, #eef4fb); }
    .fx { font: italic 15px "Liberation Serif", serif; color: #444; }
    .text { flex: 1; min-width: 0; padding-left: 8px; }
    .sheet { flex: 1; min-height: 0; border-top: 1px solid #6b90bf; font-family: "Lato", "Open Sans", sans-serif; }
  `;

  render() {
    return html`
      <header class="top">
        <button class="orb" aria-label="Office">${ICON.office}</button>
        <div class="quick">
          <button aria-label="Сохранить">${ICON.save}</button>
          <button class="undo" aria-label="Отменить">${ICON.undo}${ICON.down}</button>
          <button class="redo" aria-label="Вернуть">${ICON.redo}${ICON.down}</button>
        </div>
        <button class="more" aria-label="Настройка панели">${ICON.custom}</button>
        <div class="title">Пермский край.csv - Microsoft Excel</div>
        <button class="win" aria-label="Свернуть">${ICON.winMin}</button>
        <button class="win" aria-label="Восстановить">${ICON.winRestore}</button>
        <button class="win last" aria-label="Закрыть">${ICON.winClose}</button>
      </header>
      <nav class="tabs">
        ${["Главная", "Вставка", "Разметка страницы", "Формулы", "Данные", "Рецензирование", "Вид"].map((t, i) =>
          html`<button class="tab ${i === 0 ? "on" : ""}">${t}</button>`)}
        <div class="tools">
          <button aria-label="Справка">${ICON.help}</button>
          <button aria-label="Свернуть окно">${ICON.mdiMin}</button>
          <button aria-label="Восстановить окно">${ICON.mdiRestore}</button>
        </div>
      </nav>
      <excel-ribbon></excel-ribbon>
      <div class="bar">
        <input class="name" aria-label="Имя" value="A41">
        <button class="drop" aria-label="Список имён">${draw(7, 4, svg`<path d="M0 0h7L3.500 4z"/>`)}</button>
        <div class="knob"><span class="dot"></span><button class="fx" aria-label="Вставить функцию">fx</button></div>
        <input class="text" aria-label="Строка формул" value="Погода в доме">
      </div>
      <sheet-grid class="sheet"></sheet-grid>
    `;
  }
}
